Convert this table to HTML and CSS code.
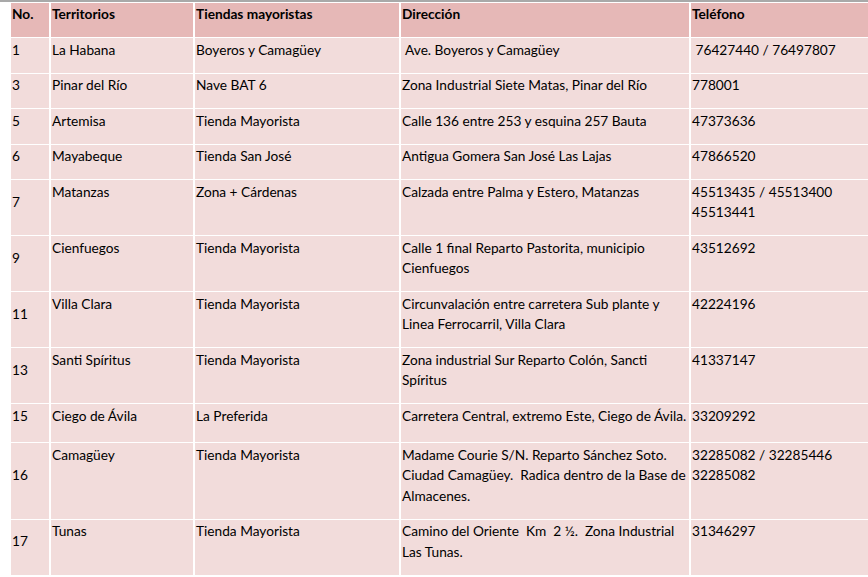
FILE: index.html
```html
<!DOCTYPE html>
<html lang="es">
<head>
<meta charset="utf-8">
<link rel="stylesheet" href="styles.css">
</head>
<body>
<div class="page">
<table class="grid">
<colgroup>
<col class="c-no"><col class="c-terr"><col class="c-tienda"><col class="c-dir"><col class="c-tel">
</colgroup>
<thead>
<tr class="head"><th class="no">No.</th><th>Territorios</th><th>Tiendas mayoristas</th><th>Dirección</th><th>Teléfono</th></tr>
</thead>
<tbody>
<tr><td class="no">1</td><td>La Habana</td><td>Boyeros y Camagüey</td><td>&nbsp;Ave. Boyeros y Camagüey</td><td>&nbsp;76427440 / 76497807</td></tr>
<tr><td class="no">3</td><td>Pinar del Río</td><td>Nave BAT 6</td><td>Zona Industrial Siete Matas, Pinar del Río</td><td>778001</td></tr>
<tr><td class="no">5</td><td>Artemisa</td><td>Tienda Mayorista</td><td>Calle 136 entre 253 y esquina 257 Bauta</td><td>47373636</td></tr>
<tr><td class="no">6</td><td>Mayabeque</td><td>Tienda San José</td><td>Antigua Gomera San José Las Lajas</td><td>47866520</td></tr>
<tr><td class="no">7</td><td>Matanzas</td><td>Zona + Cárdenas</td><td>Calzada entre Palma y Estero, Matanzas</td><td>45513435 / 45513400<br>45513441</td></tr>
<tr><td class="no">9</td><td>Cienfuegos</td><td>Tienda Mayorista</td><td>Calle 1 final Reparto Pastorita, municipio<br>Cienfuegos</td><td>43512692</td></tr>
<tr><td class="no">11</td><td>Villa Clara</td><td>Tienda Mayorista</td><td>Circunvalación entre carretera Sub plante y<br>Linea Ferrocarril, Villa Clara</td><td>42224196</td></tr>
<tr><td class="no">13</td><td>Santi Spíritus</td><td>Tienda Mayorista</td><td>Zona industrial Sur Reparto Colón, Sancti<br>Spíritus</td><td>41337147</td></tr>
<tr class="tall"><td class="no">15</td><td>Ciego de Ávila</td><td>La Preferida</td><td>Carretera Central, extremo Este, Ciego de Ávila.</td><td>33209292</td></tr>
<tr><td class="no">16</td><td>Camagüey</td><td>Tienda Mayorista</td><td>Madame Courie S/N. Reparto Sánchez Soto.<br>Ciudad Camagüey.&nbsp; Radica dentro de la Base de<br>Almacenes.</td><td>32285082 / 32285446<br>32285082</td></tr>
<tr><td class="no">17</td><td>Tunas</td><td>Tienda Mayorista</td><td>Camino del Oriente&nbsp; Km&nbsp; 2 ½.&nbsp; Zona Industrial<br>Las Tunas.</td><td>31346297</td></tr>
</tbody>
</table>
</div>
</body>
</html>
```

FILE: styles.css
```css
html, body {
  margin: 0;
  padding: 0;
  background: #ffffff;
}
body {
  width: 868px;
  height: 577px;
  overflow: hidden;
  font-family: Lato, "Liberation Sans", sans-serif;
  font-size: 13.7px;
  color: #000000;
}
.page {
  border-top: 2px solid #a9a9a9;
}
.grid {
  table-layout: fixed;
  border-collapse: separate;
  border-spacing: 2px 1px;
  margin: 0 0 0 9px;
  width: 884px;
}
.c-no { width: 38px; }
.c-terr { width: 142px; }
.c-tienda { width: 204px; }
.c-dir { width: 288px; }
.c-tel { width: 200px; }
.grid th,
.grid td {
  padding: 1.5px 1px 12.5px 1px;
  line-height: 20.5px;
  text-align: left;
  vertical-align: top;
  white-space: nowrap;
  overflow: hidden;
  background: #f2dcdb;
}
.grid th {
  background: #e6b8b7;
  font-weight: 700;
  padding-top: 0.5px;
  padding-bottom: 13px;
}
.grid td.no,
.grid th.no {
  vertical-align: middle;
}
.grid tr.tall td {
  padding-bottom: 16px;
}
```
